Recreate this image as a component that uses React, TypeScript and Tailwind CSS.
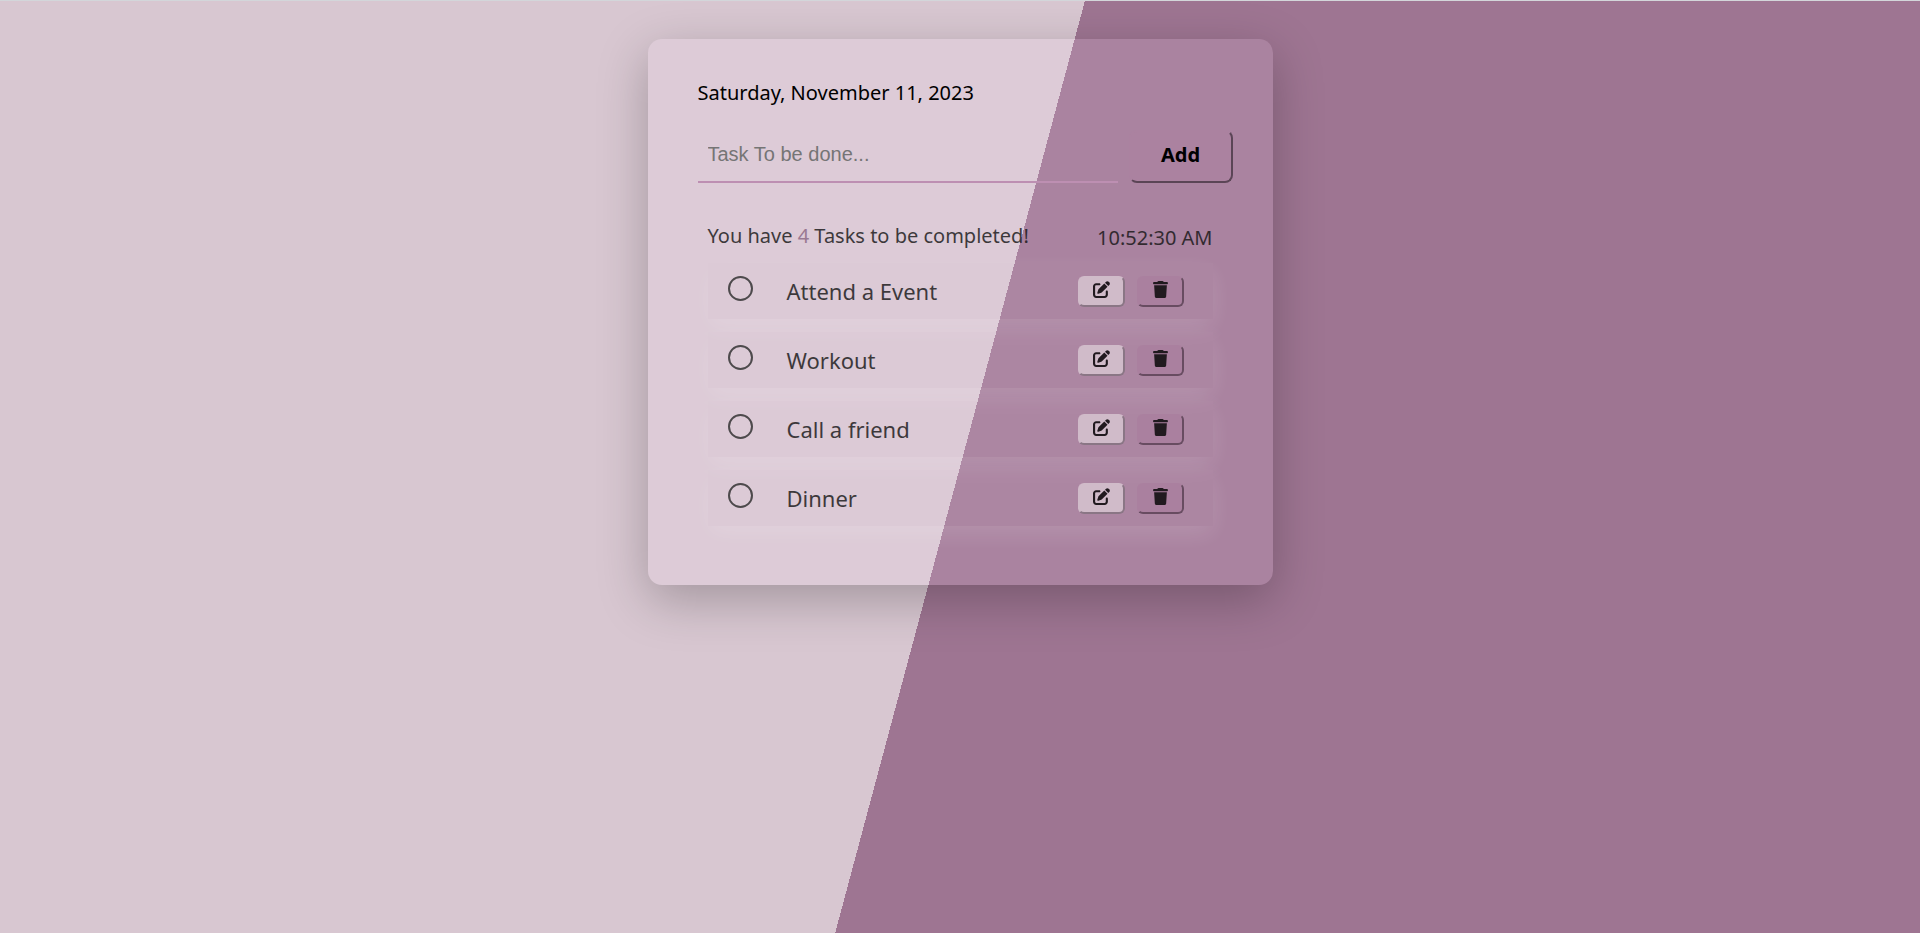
import { useState } from "react";
import { FaPenToSquare, FaTrash } from "react-icons/fa6";

const tasks = ["Attend a Event", "Workout", "Call a friend", "Dinner"];

function TaskRow({ name }: { name: string }) {
  const [done, setDone] = useState(false);
  return (
    <li className="flex h-14 items-start bg-[#d8c4cc]/8 pt-[13px] pr-[29px] pl-5 shadow-[0_8px_24px_rgba(255,255,255,0.17)]">
      <label className="flex grow items-start gap-[34px]">
        <input
          type="checkbox"
          checked={done}
          onChange={() => setDone(!done)}
          className="size-[25px] shrink-0 appearance-none rounded-full border-2 border-[#2a2a2a] checked:bg-[#2a2a2a]"
        />
        <span className="text-[22px] leading-[30px]">{name}</span>
      </label>
      <div className="flex gap-3">
        <button
          type="button"
          aria-label={`Edit ${name}`}
          className="flex h-[31px] w-[47px] justify-center rounded-md border-2 border-t-[#dac9d4] border-r-[#83747f] border-b-[#83747f] border-l-[#dac9d4] bg-[#dac9d4] pt-[3px] text-[17px] text-black"
        >
          <FaPenToSquare />
        </button>
        <button
          type="button"
          aria-label={`Delete ${name}`}
          className="flex h-[31px] w-[47px] justify-center rounded-md border-2 border-t-[#ab809f] border-r-[#583f52] border-b-[#583f52] border-l-[#ab809f] bg-[#ab809f] pt-[3px] text-[17px] text-black"
        >
          <FaTrash />
        </button>
      </div>
    </li>
  );
}

export default function App() {
  return (
    <div className="min-h-screen border-t border-[#d3d6da] bg-[linear-gradient(105deg,#d8c7d1_50%,#9e7592_50%)] px-4 pt-[38px] font-['Noto_Sans',sans-serif] text-black">
      <main className="mx-auto max-w-[625px] rounded-[14px] bg-[#ffebff]/13 pt-[38px] pr-10 pb-[59px] pl-[50px] shadow-[0_15px_50px_rgba(0,0,0,0.25)]">
        <p className="text-xl leading-8">Saturday, November 11, 2023</p>
        <form className="mt-[21px] flex items-end gap-[11px]" onSubmit={(e) => e.preventDefault()}>
          <input
            type="text"
            aria-label="New task"
            placeholder="Task To be done..."
            className="h-[53px] min-w-0 grow border-b-2 border-[#bd8fb2] bg-transparent px-2.5 pb-0.5 font-['Liberation_Sans',sans-serif] text-xl outline-none placeholder:text-[#757575]"
          />
          <button
            type="submit"
            className="h-[53px] w-[104px] rounded-lg border-2 border-t-[#ab82a0] border-r-[#5b4556] border-b-[#5b4556] border-l-[#ab82a0] bg-[#ab82a0] pb-1 text-xl font-bold"
          >
            Add
          </button>
        </form>
        <section className="mt-[37px] pr-5 pl-2.5 text-[#141414] opacity-80">
          <div className="flex justify-between text-xl leading-8">
            <h2>
              You have <span className="text-[#8a6582]">4</span> Tasks to be completed!
            </h2>
            <time className="pt-0.5">10:52:30 AM</time>
          </div>
          <ul className="mt-[9px] flex flex-col gap-[13px]">
            {tasks.map((name) => (
              <TaskRow key={name} name={name} />
            ))}
          </ul>
        </section>
      </main>
    </div>
  );
}
